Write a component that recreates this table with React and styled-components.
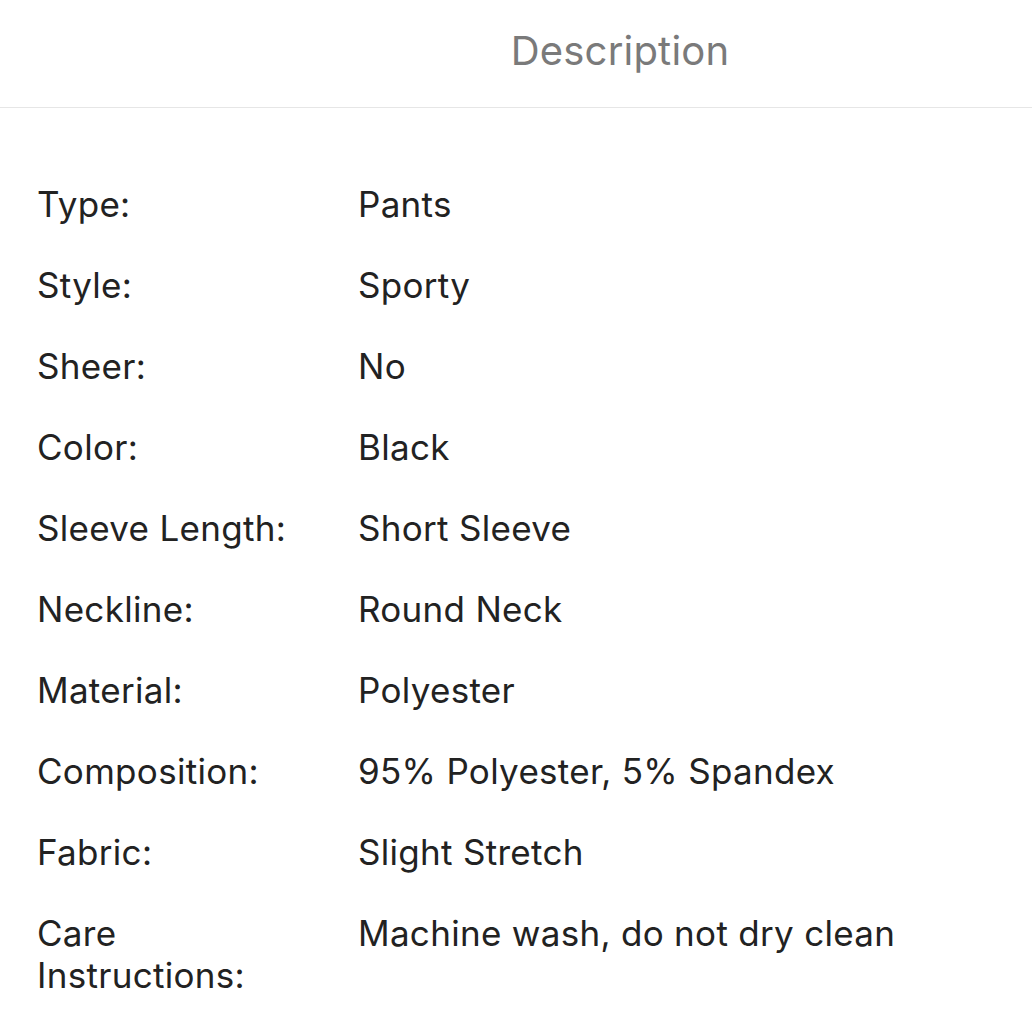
import React from "react";
import styled, { createGlobalStyle } from "styled-components";

const Global = createGlobalStyle`
  html, body { margin: 0; padding: 0; background: #fff; }
  body { font-family: Inter, "Noto Sans", sans-serif; -webkit-font-smoothing: antialiased; }
`;

const Page = styled.div`
  width: 1032px;
  min-height: 1023px;
  background: #fff;
`;

const Header = styled.header`
  height: 108px;
  border-bottom: 1px solid #e6e6e6;
  display: flex;
  align-items: center;
  justify-content: center;
  padding-left: 208px;
  box-sizing: border-box;
`;

const Title = styled.h1`
  margin: 0 0 6px;
  font-size: 40px;
  font-weight: 400;
  color: #7a7a7a;
  letter-spacing: 0.2px;
`;

const Specs = styled.dl`
  margin: 0;
  padding: 75px 0 0 37px;
  display: grid;
  grid-template-columns: 321px 1fr;
  row-gap: 39px;
  font-size: 35px;
  line-height: 42px;
  letter-spacing: 0.3px;
  color: #222;
`;

const Term = styled.dt`
  margin: 0;
  padding-right: 40px;
`;

const Value = styled.dd`
  margin: 0;
`;

const specs = [
  ["Type:", "Pants"],
  ["Style:", "Sporty"],
  ["Sheer:", "No"],
  ["Color:", "Black"],
  ["Sleeve Length:", "Short Sleeve"],
  ["Neckline:", "Round Neck"],
  ["Material:", "Polyester"],
  ["Composition:", "95% Polyester, 5% Spandex"],
  ["Fabric:", "Slight Stretch"],
  ["Care Instructions:", "Machine wash, do not dry clean"],
];

export default function App() {
  return (
    <Page>
      <Global />
      <Header>
        <Title>Description</Title>
      </Header>
      <Specs>
        {specs.map(([k, v]) => (
          <React.Fragment key={k}>
            <Term>{k}</Term>
            <Value>{v}</Value>
          </React.Fragment>
        ))}
      </Specs>
    </Page>
  );
}
